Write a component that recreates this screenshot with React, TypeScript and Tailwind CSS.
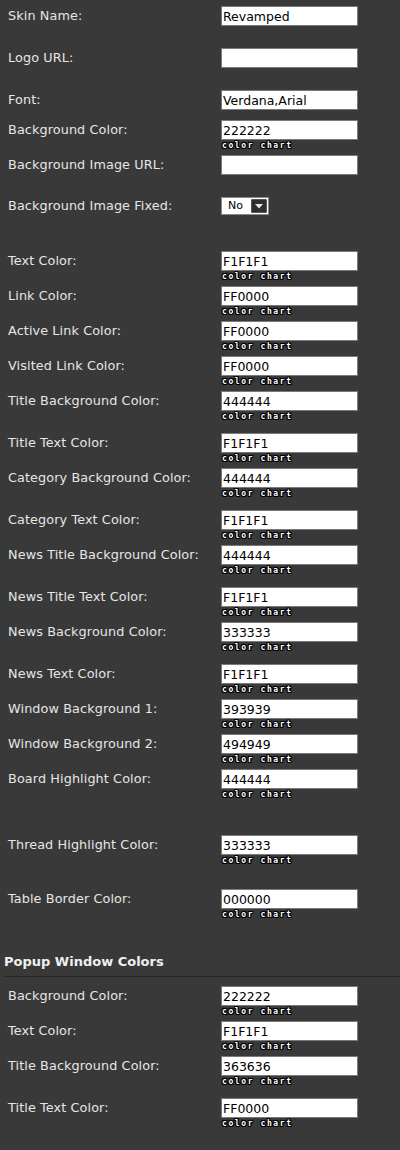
import React from "react";

type Field = {
  label: string;
  value?: string;
  chart?: boolean;
  h: string;
};

const mainFields: Field[] = [
  { label: "Skin Name:", value: "Revamped", h: "h-[42px]" },
  { label: "Logo URL:", value: "", h: "h-[42px]" },
  { label: "Font:", value: "Verdana,Arial", h: "h-[30px]" },
  { label: "Background Color:", value: "222222", chart: true, h: "h-[35px]" },
  { label: "Background Image URL:", value: "", h: "h-[42px]" },
];

const colorFields: Field[] = [
  { label: "Text Color:", value: "F1F1F1", chart: true, h: "h-[35px]" },
  { label: "Link Color:", value: "FF0000", chart: true, h: "h-[35px]" },
  { label: "Active Link Color:", value: "FF0000", chart: true, h: "h-[35px]" },
  { label: "Visited Link Color:", value: "FF0000", chart: true, h: "h-[35px]" },
  { label: "Title Background Color:", value: "444444", chart: true, h: "h-[42px]" },
  { label: "Title Text Color:", value: "F1F1F1", chart: true, h: "h-[35px]" },
  { label: "Category Background Color:", value: "444444", chart: true, h: "h-[42px]" },
  { label: "Category Text Color:", value: "F1F1F1", chart: true, h: "h-[35px]" },
  { label: "News Title Background Color:", value: "444444", chart: true, h: "h-[42px]" },
  { label: "News Title Text Color:", value: "F1F1F1", chart: true, h: "h-[35px]" },
  { label: "News Background Color:", value: "333333", chart: true, h: "h-[42px]" },
  { label: "News Text Color:", value: "F1F1F1", chart: true, h: "h-[35px]" },
  { label: "Window Background 1:", value: "393939", chart: true, h: "h-[35px]" },
  { label: "Window Background 2:", value: "494949", chart: true, h: "h-[35px]" },
  { label: "Board Highlight Color:", value: "444444", chart: true, h: "h-[66px]" },
  { label: "Thread Highlight Color:", value: "333333", chart: true, h: "h-[54px]" },
  { label: "Table Border Color:", value: "000000", chart: true, h: "h-[65px]" },
];

const popupFields: Field[] = [
  { label: "Background Color:", value: "222222", chart: true, h: "h-[35px]" },
  { label: "Text Color:", value: "F1F1F1", chart: true, h: "h-[35px]" },
  { label: "Title Background Color:", value: "363636", chart: true, h: "h-[42px]" },
  { label: "Title Text Color:", value: "FF0000", chart: true, h: "h-[40px]" },
];

const Row = ({ label, value, chart, h }: Field) => {
  return (
    <div className={`flex items-start ${h}`}>
      <div className="w-[221px] pl-[8px] h-[19px] flex items-center text-[12.8px] tracking-[0.1px]">
        {label}
      </div>
      <div className="flex flex-col">
        <input
          type="text"
          defaultValue={value}
          className="w-[137px] h-[20px] border border-[#7a7a7a] bg-white text-black text-[12.5px] leading-[18px] pl-[1px] outline-none font-['DejaVu_Sans',sans-serif]"
        />
        {chart && (
          <div className="mt-[2px] ml-[1px] h-[8px] text-[8px] leading-[8px] font-bold tracking-[1.6px] text-white [text-shadow:1px_0_0_#000,-1px_0_0_#000,0_1px_0_#000,0_-1px_0_#000,1px_1px_0_#000,-1px_-1px_0_#000,1px_-1px_0_#000,-1px_1px_0_#000] font-['DejaVu_Sans_Mono',monospace] cursor-pointer">
            color chart
          </div>
        )}
      </div>
    </div>
  );
};

const App = () => {
  return (
    <div className="min-h-[1150px] bg-[#393939] text-[#e6e6e6] font-['DejaVu_Sans',sans-serif]">
      <div className="pt-[6px]">
        {mainFields.map((f) => (
          <Row key={f.label} {...f} />
        ))}
        <div className="flex items-start h-[54px]">
          <div className="w-[221px] pl-[8px] h-[17px] flex items-center text-[12.8px] tracking-[0.1px]">
            Background Image Fixed:
          </div>
          <div className="w-[48px] h-[18px] border border-[#8a8a8a] bg-white flex items-center justify-between pl-[6px] pr-[1px]">
            <span className="text-black text-[11px]">No</span>
            <span className="w-[16px] h-[14px] bg-[#2e2e2e] border border-[#555] rounded-[1px] flex items-center justify-center">
              <svg width="8" height="5" viewBox="0 0 8 5">
                <path d="M0 0 L8 0 L4 4.5 Z" fill="#e8e8e8" />
              </svg>
            </span>
          </div>
        </div>
        {colorFields.map((f) => (
          <Row key={f.label} {...f} />
        ))}
      </div>
      <div className="ml-[4px] h-[23px] border-b border-[#262626]">
        <h3 className="text-[13px] leading-[16px] font-bold text-[#f0f0f0]">Popup Window Colors</h3>
      </div>
      <div className="mt-[9px]">
        {popupFields.map((f) => (
          <Row key={"p" + f.label} {...f} />
        ))}
      </div>
    </div>
  );
};

export default App;
